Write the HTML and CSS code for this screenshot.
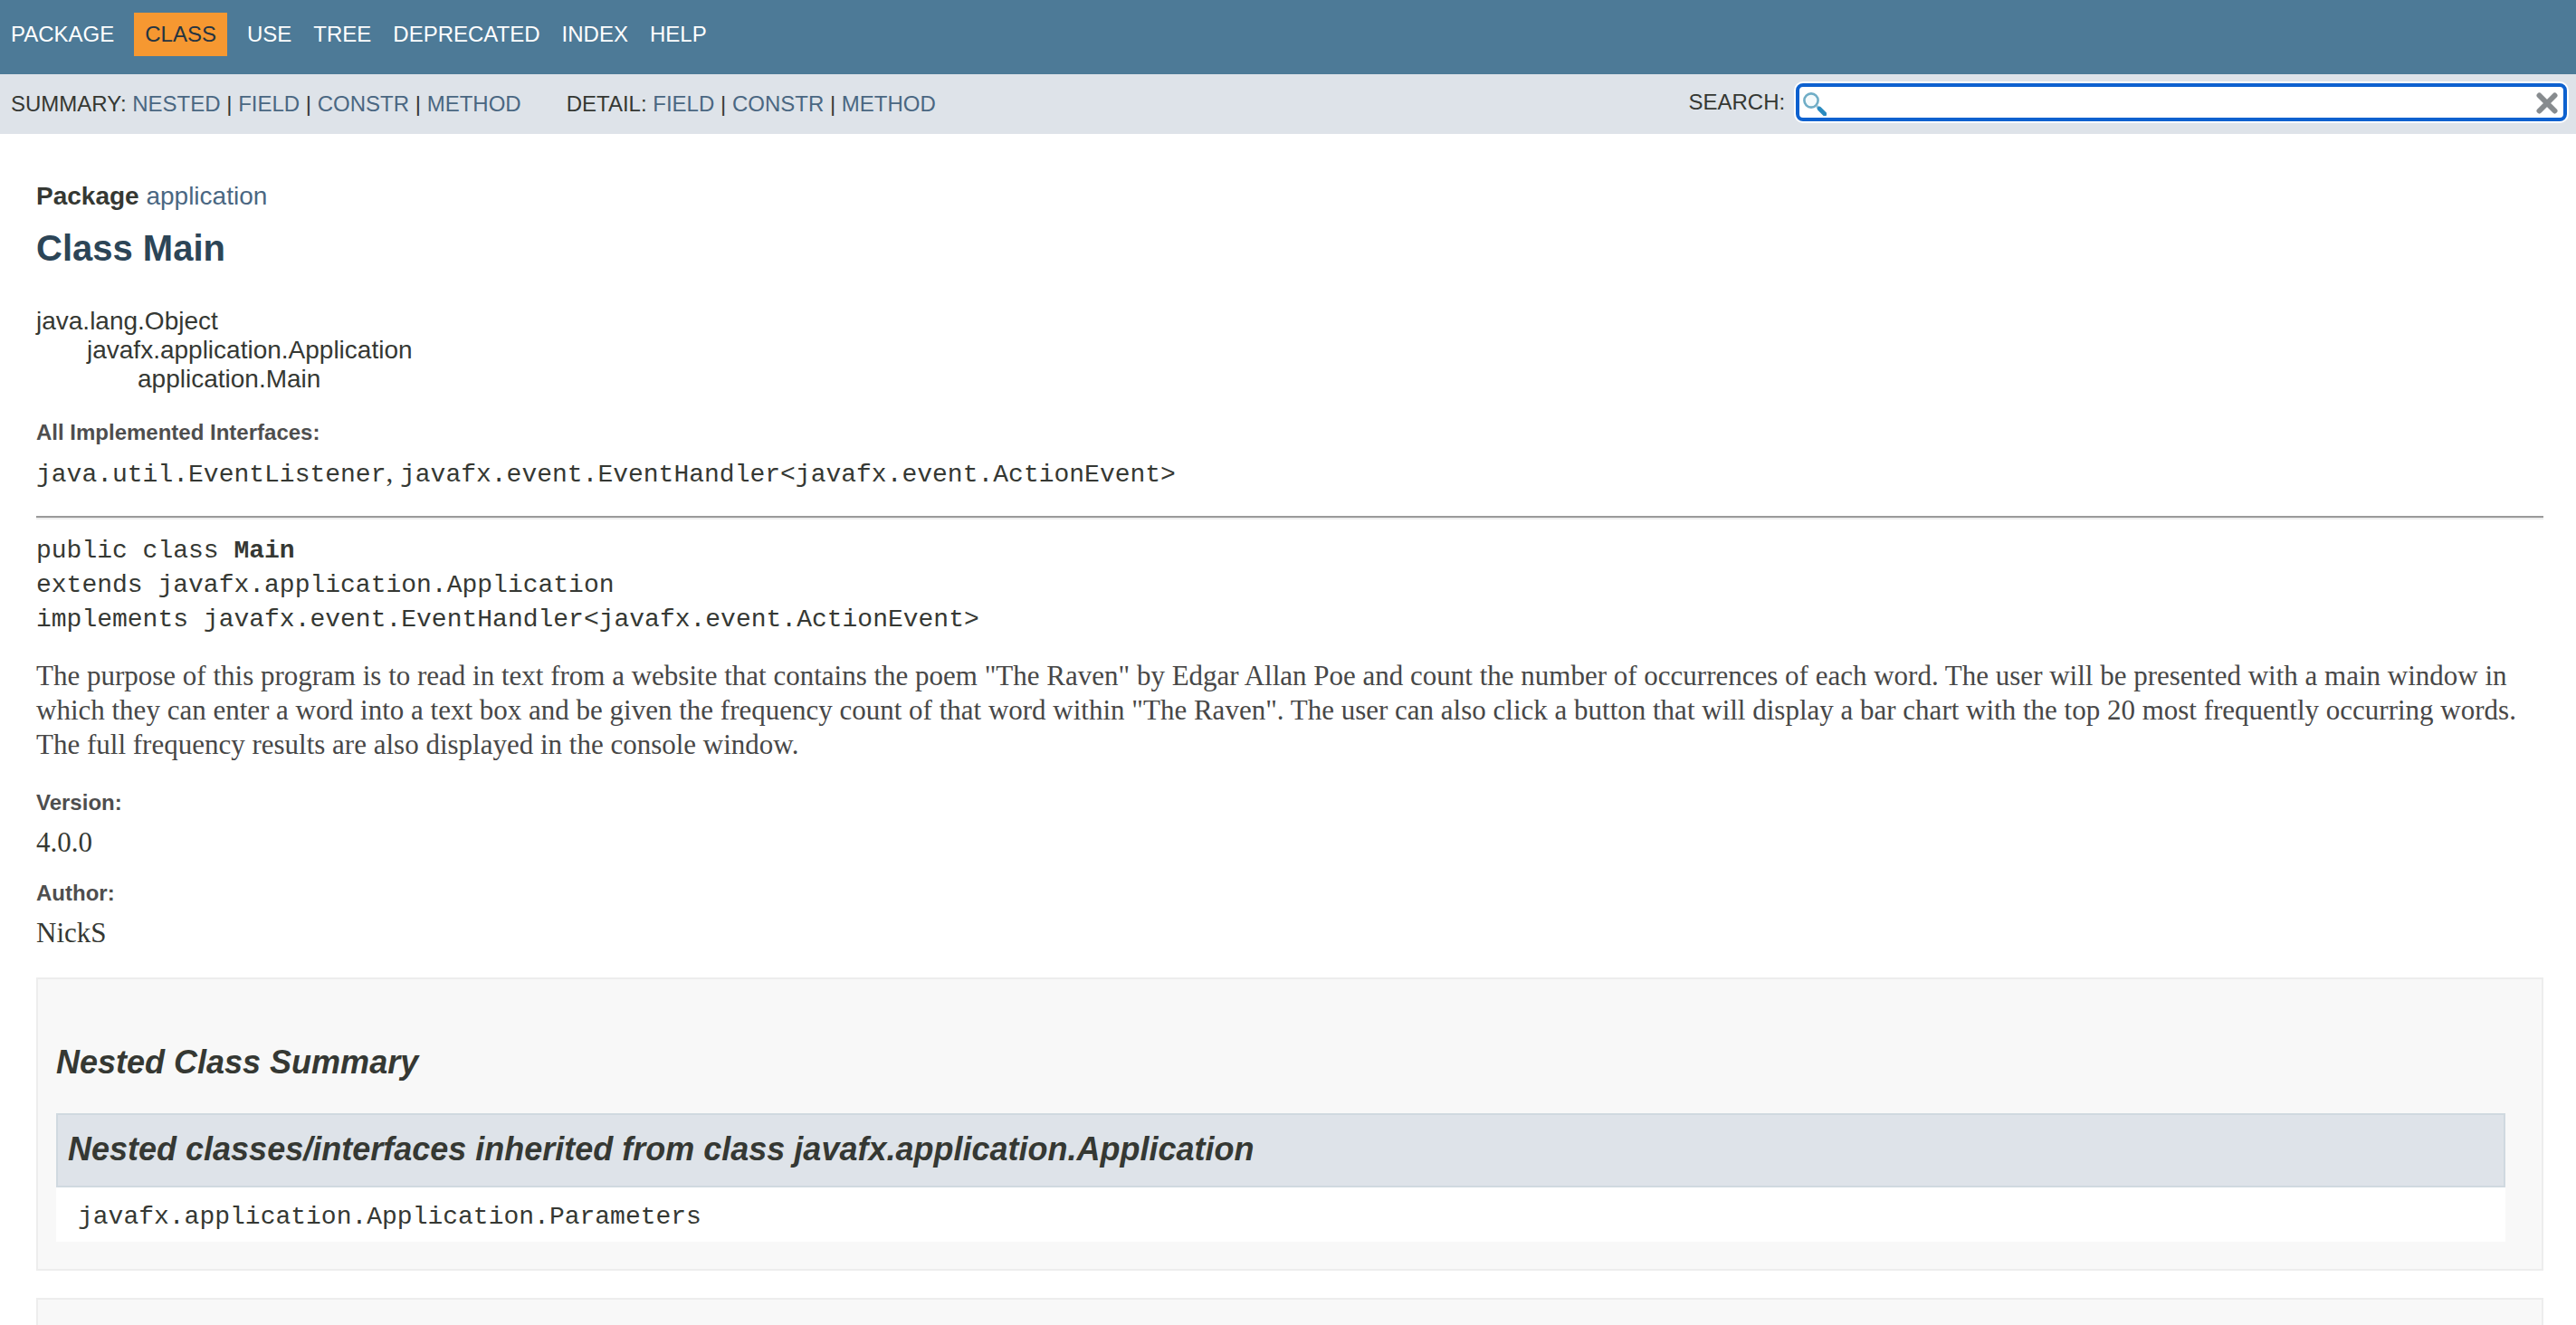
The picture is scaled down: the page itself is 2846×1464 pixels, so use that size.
FILE: index.html
```html
<!DOCTYPE html>
<html lang="en">
<head>
<meta charset="utf-8">
<title>Main</title>
<link rel="stylesheet" href="styles.css">
</head>
<body>
<header>
  <nav class="top-nav">
    <ul class="nav-list">
      <li><a href="#">Package</a></li>
      <li class="current">Class</li>
      <li><a href="#">Use</a></li>
      <li><a href="#">Tree</a></li>
      <li><a href="#">Deprecated</a></li>
      <li><a href="#">Index</a></li>
      <li><a href="#">Help</a></li>
    </ul>
  </nav>
  <div class="sub-nav">
    <div class="sub-nav-links">
      <div>SUMMARY: <a href="#nested">NESTED</a> | <a href="#">FIELD</a> | <a href="#">CONSTR</a> | <a href="#">METHOD</a></div>
      <div>DETAIL: <a href="#">FIELD</a> | <a href="#">CONSTR</a> | <a href="#">METHOD</a></div>
    </div>
    <label class="search-label" for="search">SEARCH:</label>
    <div class="search-box">
      <svg class="glass" viewBox="0 0 26 26" aria-hidden="true">
        <circle cx="9" cy="9" r="7.6" fill="#f4fafc" stroke="#6fadc6" stroke-width="2.6"/>
        <path d="M15 15l2 2" stroke="#9cc4d4" stroke-width="3"/>
        <path d="M18 18l6 6" stroke="#2a8bc0" stroke-width="4.6" stroke-linecap="round"/>
      </svg>
      <input type="text" id="search">
      <button type="reset" class="clear" aria-label="Reset">
        <svg viewBox="0 0 24 24" aria-hidden="true"><path d="M3.5 3.5l17 17M20.5 3.5l-17 17" stroke="#878b8e" stroke-width="6" stroke-linecap="round"/></svg>
      </button>
    </div>
  </div>
</header>
<main>
  <div class="package"><strong>Package</strong> <a href="#">application</a></div>
  <h1>Class Main</h1>
  <div class="inheritance">java.lang.Object
    <div>javafx.application.Application
      <div>application.Main</div>
    </div>
  </div>
  <dl class="notes">
    <dt>All Implemented Interfaces:</dt>
    <dd><code>java.util.EventListener</code>, <code>javafx.event.EventHandler&lt;javafx.event.ActionEvent&gt;</code></dd>
  </dl>
  <hr>
  <div class="signature">public class <strong>Main</strong>
extends javafx.application.Application
implements javafx.event.EventHandler&lt;javafx.event.ActionEvent&gt;</div>
  <p class="description">The purpose of this program is to read in text from a website that contains the poem "The Raven" by Edgar Allan Poe and count the number of occurrences of each word. The user will be presented with a main window in which they can enter a word into a text box and be given the frequency count of that word within "The Raven". The user can also click a button that will display a bar chart with the top 20 most frequently occurring words. The full frequency results are also displayed in the console window.</p>
  <dl class="notes">
    <dt>Version:</dt>
    <dd>4.0.0</dd>
    <dt>Author:</dt>
    <dd>NickS</dd>
  </dl>
  <section class="summary" id="nested">
    <h2>Nested Class Summary</h2>
    <div class="inherited">
      <h3>Nested classes/interfaces inherited from class javafx.application.Application</h3>
      <code>javafx.application.Application.Parameters</code>
    </div>
  </section>
  <section class="summary"></section>
</main>
</body>
</html>
```
FILE: styles.css
```css
* { box-sizing: border-box; }

html { height: 100%; }

body {
  display: flex;
  flex-direction: column;
  margin: 0;
  height: 100%;
  background: #fff;
  color: #353833;
  font: 28px/32px "Liberation Sans", Arial, sans-serif;
}

a { color: #4a6782; text-decoration: none; }

code, .signature { font-family: "Liberation Mono", "Courier New", monospace; font-size: 28px; }

.top-nav {
  background: #4d7a97;
  color: #fff;
  padding: 14px 0 20px;
  font-size: 24px;
  line-height: 28px;
  text-transform: uppercase;
}

.nav-list { display: flex; margin: 0; padding: 0; list-style: none; }
.nav-list li { padding: 10px 12px; }
.nav-list a { color: #fff; }
.nav-list .current { margin: 0 10px; background: #f69831; color: #253441; }

.sub-nav {
  display: flex;
  align-items: center;
  padding: 10px 0 14px;
  background: #dee3e9;
  font-size: 24px;
  line-height: 28px;
}

.sub-nav-links { display: flex; flex: 1; gap: 50px; padding: 4px 0 0 12px; }
.search-label { margin-right: 12px; }

.search-box { position: relative; width: calc(30% - 2px); height: 42px; margin-right: 10px; }
.search-box input {
  display: block;
  width: 100%;
  height: 100%;
  padding: 0 40px;
  border: 4px solid #0d61cf;
  border-radius: 8px;
  outline: 0;
  background: #fff;
  box-shadow: 0 0 0 2px #fff;
  font: inherit;
}
.glass { position: absolute; left: 8px; top: 10px; width: 26px; height: 26px; }
.clear {
  position: absolute;
  right: 10px;
  top: 10px;
  width: 24px;
  height: 24px;
  padding: 0;
  border: 0;
  background: none;
}
.clear svg { display: block; width: 24px; height: 24px; }

main { flex: 1; min-height: 0; overflow: hidden; padding: 53px 36px 0 40px; }

h1 { margin: 18px 0 42px; color: #2c4557; font-size: 40px; line-height: 46px; }

.inheritance { margin-bottom: 29px; }
.inheritance div { margin-left: 56px; }

.notes, .description { font-family: "Liberation Serif", Georgia, serif; font-size: 31px; line-height: 38px; }
.notes { margin: 0; }
.notes dt {
  color: #4e4e4e;
  font: bold 24px/28px "Liberation Sans", Arial, sans-serif;
}
.notes dd { margin: 11px 0 23px; }

hr {
  height: 4px;
  margin: 26px 0 16px;
  border: 0;
  border-top: 2px solid #9a9a9a;
  border-bottom: 2px solid #eee;
}

.signature { line-height: 38px; white-space: pre-wrap; }
.description { margin: 24px 0 31px; color: #474747; }

.summary {
  margin: 30px 0;
  padding: 71px 40px 30px 20px;
  border: 2px solid #ededed;
  background: #f8f8f8;
}
.summary h2, .summary h3 { font-size: 36px; line-height: 42px; font-style: italic; }
.summary h2 { margin: 0 0 35px; }
.summary h3 {
  margin: 0;
  padding: 17px 11px 19px;
  border: 2px solid #d0d9e0;
  background: #dee3e9;
}
.inherited { background: #fff; }
.inherited code { display: block; padding: 14px 24px 8px; line-height: 38px; }
```
